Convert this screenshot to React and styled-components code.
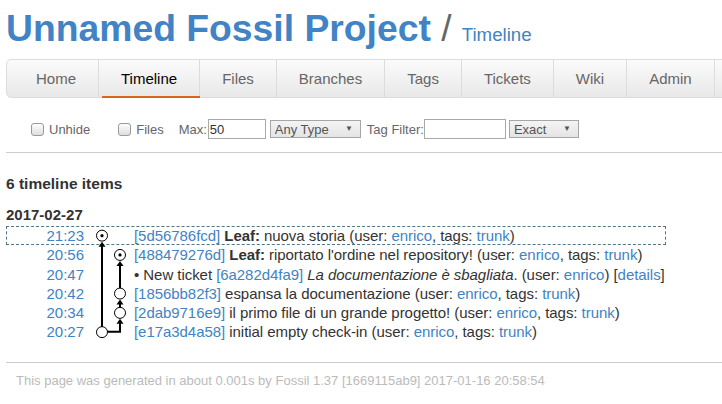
import React from 'react';
import styled, { createGlobalStyle, css } from 'styled-components';

const GlobalStyle = createGlobalStyle`
  html, body { margin: 0; padding: 0; background: #fff; }
  body {
    font-family: "Liberation Sans", Arial, Helvetica, sans-serif;
    color: #333;
    overflow: hidden;
  }
`;

const Page = styled.div`
  padding-left: 6px;
  width: 716px;
  overflow: hidden;
`;

const Header = styled.div`
  padding-top: 7px;
  height: 42px;
  line-height: 42px;
  white-space: nowrap;
`;

const Title = styled.span`
  font-size: 37.3px;
  font-weight: bold;
  color: #4183c4;
`;

const Slash = styled.span`
  font-size: 37px;
  color: #666;
  white-space: pre;
`;

const SubTitle = styled.span`
  font-size: 18.7px;
  color: #4183c4;
`;

const Nav = styled.nav`
  margin-top: 10px;
  width: 740px;
  height: 37px;
  display: flex;
  padding-left: 7px;
  border: 1px solid #ddd;
  border-radius: 5px;
  background: linear-gradient(#fbfbfb, #e8e8e8);
  box-sizing: content-box;
`;

const NavItem = styled.a`
  position: relative;
  display: flex;
  align-items: center;
  padding: 0 22px;
  border-right: 1px solid #dcdcdc;
  font-size: 15px;
  color: ${(p) => (p.$active ? '#000' : '#666')};
  text-decoration: none;
  ${(p) =>
    p.$active &&
    css`
      &::after {
        content: '';
        position: absolute;
        left: 3px;
        right: -1px;
        bottom: -1px;
        height: 2px;
        background: #d9661a;
      }
    `}
`;

const Form = styled.div`
  margin-top: 21px;
  height: 20px;
  display: flex;
  align-items: center;
  padding-left: 25px;
  font-size: 13px;
  color: #666;
  white-space: nowrap;
`;

const CheckLabel = styled.label`
  display: flex;
  align-items: center;
  margin-right: ${(p) => p.$gap}px;
`;

const Check = styled.input`
  appearance: none;
  width: 13px;
  height: 13px;
  margin: 0 5px 0 0;
  border: 1px solid #9a9a9a;
  border-radius: 3px;
  background: linear-gradient(#fdfdfd, #dedede);
  box-sizing: border-box;
`;

const Label = styled.span`
  margin-right: ${(p) => p.$gap || 0}px;
`;

const TextInput = styled.input`
  width: ${(p) => p.$w}px;
  height: 20px;
  box-sizing: border-box;
  border: 1px solid #a9a9a9;
  padding: 0 1px;
  margin: 0 ${(p) => p.$gap}px 0 0;
  font: 13px "Liberation Sans", Arial, sans-serif;
  color: #333;
  outline: none;
`;

const SelectWrap = styled.span`
  position: relative;
  display: inline-flex;
  margin-right: ${(p) => p.$gap || 0}px;
`;

const Select = styled.select`
  appearance: none;
  width: ${(p) => p.$w}px;
  height: 18px;
  box-sizing: border-box;
  border: 1px solid #a6a6a6;
  border-radius: 0;
  background: linear-gradient(#f4f4f4, #e4e4e4);
  padding: 0 0 0 4px;
  margin: 0;
  font: 13px "Liberation Sans", Arial, sans-serif;
  color: #555;
  outline: none;
`;

const Arrow = styled.span`
  position: absolute;
  right: 8px;
  top: 4px;
  font-size: 8px;
  line-height: 10px;
  color: #555;
  pointer-events: none;
`;

const Rule = styled.hr`
  margin: ${(p) => p.$top}px 0 0;
  border: 0;
  border-top: 1px solid #ccc;
  height: 0;
`;

const Count = styled.div`
  margin-top: 21px;
  font-size: 15.5px;
  font-weight: bold;
  line-height: 19px;
  color: #333;
`;

const DateHead = styled.div`
  margin-top: 12px;
  font-size: 15px;
  font-weight: bold;
  line-height: 19px;
  color: #333;
`;

const Timeline = styled.div`
  position: relative;
  margin-top: 2px;
  width: max-content;
  font-size: 15px;
`;

const Row = styled.div`
  display: grid;
  grid-template-columns: 78px 50px auto;
  height: 19.3px;
  line-height: 19.3px;
  white-space: nowrap;
  ${(p) =>
    p.$current &&
    css`
      outline: 1px dashed #567684;
      outline-offset: -1px;
    `}
`;

const Time = styled.a`
  text-align: right;
  color: #4183c4;
  text-decoration: none;
`;

const Cell = styled.div`
  padding-right: 1px;
  color: #333;
  letter-spacing: -0.05px;
`;

const Link = styled.a`
  color: #4183c4;
  text-decoration: none;
`;

const Graph = styled.svg`
  position: absolute;
  left: 78px;
  top: 0;
`;

const Footer = styled.div`
  padding: 10px 0 0 10px;
  font-size: 13px;
  line-height: 16px;
  color: #bbb;
  white-space: nowrap;
`;

const menu = ['Home', 'Timeline', 'Files', 'Branches', 'Tags', 'Tickets', 'Wiki', 'Admin'];

const Tags = () => (
  <>
    (user: <Link href="#">enrico</Link>, tags: <Link href="#">trunk</Link>)
  </>
);

const rows = [
  {
    time: '21:23',
    current: true,
    body: (
      <>
        <Link href="#">[5d56786fcd]</Link> <b>Leaf:</b> nuova storia <Tags />
      </>
    ),
  },
  {
    time: '20:56',
    body: (
      <>
        <Link href="#">[488479276d]</Link> <b>Leaf:</b> riportato l'ordine nel repository! <Tags />
      </>
    ),
  },
  {
    time: '20:47',
    body: (
      <>
        • New ticket <Link href="#">[6a282d4fa9]</Link> <i>La documentazione è sbagliata</i>. (user:{' '}
        <Link href="#">enrico</Link>) [<Link href="#">details</Link>]
      </>
    ),
  },
  {
    time: '20:42',
    body: (
      <>
        <Link href="#">[1856bb82f3]</Link> espansa la documentazione <Tags />
      </>
    ),
  },
  {
    time: '20:34',
    body: (
      <>
        <Link href="#">[2dab9716e9]</Link> il primo file di un grande progetto! <Tags />
      </>
    ),
  },
  {
    time: '20:27',
    body: (
      <>
        <Link href="#">[e17a3d4a58]</Link> initial empty check-in <Tags />
      </>
    ),
  },
];

const RH = 19.3;
const cy = (i) => RH * i + RH / 2;

const ArrowHead = ({ x, y }) => <polygon points={`${x},${y} ${x - 3.5},${y + 5} ${x + 3.5},${y + 5}`} fill="#000" />;

const Node = ({ x, y, dot }) => (
  <g>
    <circle cx={x} cy={y} r="5.5" fill="#fff" stroke="#000" strokeWidth="1" />
    {dot && <circle cx={x} cy={y} r="1.6" fill="#000" />}
  </g>
);

const GraphDrawing = () => {
  const A = 18;
  const B = 36;
  const y0 = cy(0), y1 = cy(1), y3 = cy(3), y4 = cy(4), y5 = cy(5);
  return (
    <Graph width="50" height={RH * 6} viewBox={`0 0 50 ${RH * 6}`}>
      <g stroke="#000" strokeWidth="2" fill="none">
        <line x1={A} y1={y5 - 5} x2={A} y2={y0 + 10} />
        <polyline points={`${A + 5},${y5 - 0.5} ${B},${y5 - 0.5} ${B},${y4 + 10}`} />
        <line x1={B} y1={y4 - 5} x2={B} y2={y3 + 10} />
        <line x1={B} y1={y3 - 5} x2={B} y2={y1 + 10} />
      </g>
      <ArrowHead x={A} y={y0 + 6} />
      <ArrowHead x={B} y={y4 + 6} />
      <ArrowHead x={B} y={y3 + 6} />
      <ArrowHead x={B} y={y1 + 6} />
      <Node x={A} y={y0} dot />
      <Node x={B} y={y1} dot />
      <Node x={B} y={y3} />
      <Node x={B} y={y4} />
      <Node x={A} y={y5} />
    </Graph>
  );
};

export default function App() {
  return (
    <>
      <GlobalStyle />
      <Page>
        <Header>
          <Title>Unnamed Fossil Project</Title>
          <Slash> / </Slash>
          <SubTitle>Timeline</SubTitle>
        </Header>
        <Nav>
          {menu.map((m) => (
            <NavItem key={m} href="#" $active={m === 'Timeline'}>
              {m}
            </NavItem>
          ))}
        </Nav>
        <Form>
          <CheckLabel $gap={28}>
            <Check type="checkbox" />
            Unhide
          </CheckLabel>
          <CheckLabel $gap={15}>
            <Check type="checkbox" />
            Files
          </CheckLabel>
          <Label $gap={1}>Max:</Label>
          <TextInput $w={58} $gap={4} defaultValue="50" />
          <SelectWrap $gap={6}>
            <Select $w={91} defaultValue="any">
              <option value="any">Any Type</option>
            </Select>
            <Arrow>▼</Arrow>
          </SelectWrap>
          <Label>Tag Filter:</Label>
          <TextInput $w={82} $gap={3} defaultValue="" />
          <SelectWrap>
            <Select $w={70} defaultValue="exact">
              <option value="exact">Exact</option>
            </Select>
            <Arrow>▼</Arrow>
          </SelectWrap>
        </Form>
        <Rule $top={13} />
        <Count>6 timeline items</Count>
        <DateHead>2017-02-27</DateHead>
        <Timeline>
          {rows.map((r) => (
            <Row key={r.time} $current={r.current}>
              <Time href="#">{r.time}</Time>
              <span />
              <Cell>{r.body}</Cell>
            </Row>
          ))}
          <GraphDrawing />
        </Timeline>
        <Rule $top={20} />
        <Footer>
          This page was generated in about 0.001s by Fossil 1.37 [1669115ab9] 2017-01-16 20:58:54
        </Footer>
      </Page>
    </>
  );
}
